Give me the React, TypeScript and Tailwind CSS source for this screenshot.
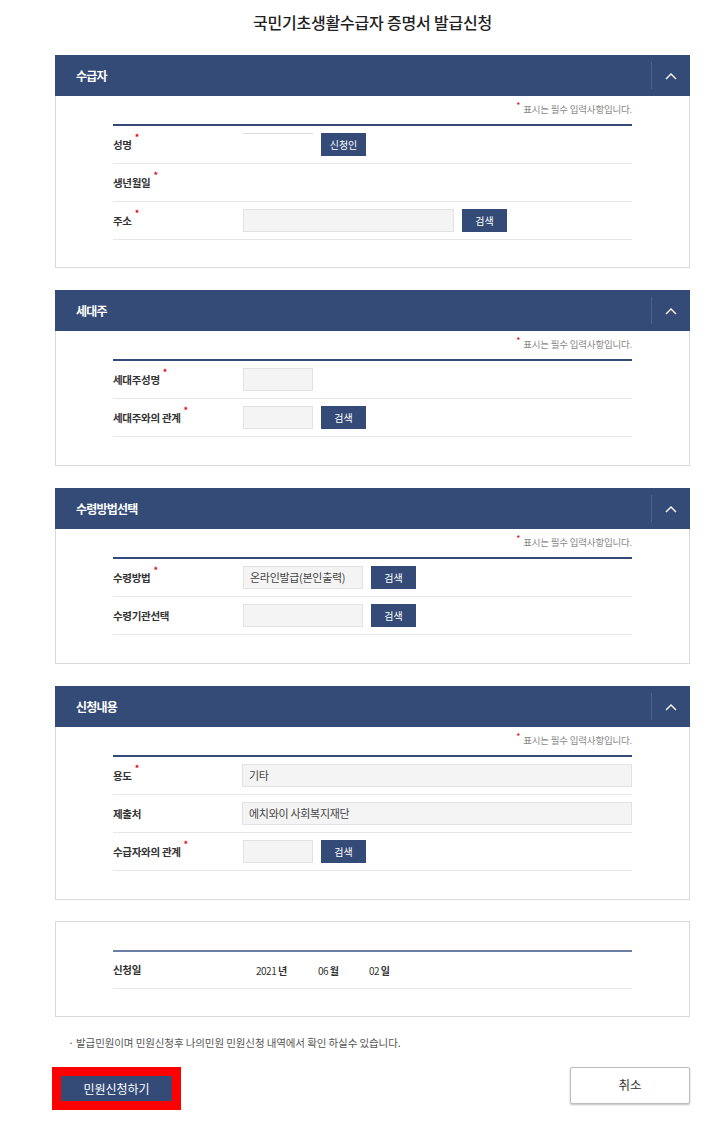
import type { ReactNode } from "react";

const FONT = { fontFamily: '"Noto Sans CJK KR", "Noto Sans", sans-serif' };

function Star() {
  return <span className="relative -top-[7px] ml-[3px] text-[9px] leading-none text-[#e60012]">*</span>;
}

function Btn({ children }: { children: ReactNode }) {
  return (
    <div className="flex h-[23px] w-[45px] items-center justify-center bg-[#344b77] text-[10px] text-white">
      {children}
    </div>
  );
}

function Field({ w, value, plain }: { w: string; value?: string; plain?: boolean }) {
  return (
    <div
      className={`${w} flex h-[23px] items-center pl-[6px] text-[11px] tracking-[-0.3px] text-[#444] ${
        plain ? "border-t border-[#dcdcdc] bg-white" : "border border-[#e2e2e2] bg-[#f4f4f4]"
      }`}
    >
      {value}
    </div>
  );
}

function Row({ label, req, children }: { label: string; req?: boolean; children?: ReactNode }) {
  return (
    <div className="flex h-[38px] items-center border-b border-[#e6e6e6]">
      <div className="flex w-[130px] items-center text-[10.5px] font-bold tracking-[-0.3px] text-[#333]">
        {label}
        {req && <Star />}
      </div>
      <div className="flex items-center gap-[8px]">{children}</div>
    </div>
  );
}

function Section({ title, pb, children }: { title: string; pb: string; children: ReactNode }) {
  return (
    <div>
      <div className="flex h-[41px] items-center bg-[#344b77] pl-[21px]">
        <span className="text-[12px] font-bold tracking-[-0.8px] text-white">{title}</span>
        <div className="ml-auto h-[27px] w-px bg-[#4c6290]" />
        <div className="flex w-[38px] items-center justify-center">
          <svg width="12" height="8" viewBox="0 0 12 8" fill="none">
            <path d="M1 7L6 2L11 7" stroke="white" strokeWidth="1.4" />
          </svg>
        </div>
      </div>
      <div className={`border-x border-b border-[#d9d9d9] px-[57px] pt-[7px] ${pb}`}>
        <div className="flex h-[13px] items-center justify-end text-[9.5px] tracking-[-0.2px] text-[#888]">
          <span className="relative -top-[4px] mr-[3px] text-[9px] leading-none text-[#e60012]">*</span>
          표시는 필수 입력사항입니다.
        </div>
        <div className="mt-[8px] h-[2px] bg-[#344b77]" />
        {children}
      </div>
    </div>
  );
}

export default function App() {
  return (
    <div className="min-h-screen w-full bg-white pb-[14px]" style={FONT}>
      <div className="ml-[55px] w-[635px]">
        <div className="h-[55px] pt-[11px] text-center text-[16px] font-medium leading-[22px] tracking-[-0.2px] text-[#222]">
          국민기초생활수급자 증명서 발급신청
        </div>

        <div className="flex flex-col gap-[22px]">
          <Section title="수급자" pb="pb-[27px]">
            <Row label="성명" req>
              <Field w="w-[70px]" plain />
              <Btn>신청인</Btn>
            </Row>
            <Row label="생년월일" req />
            <Row label="주소" req>
              <Field w="w-[211px]" />
              <Btn>검색</Btn>
            </Row>
          </Section>

          <Section title="세대주" pb="pb-[28px]">
            <Row label="세대주성명" req>
              <Field w="w-[70px]" />
            </Row>
            <Row label="세대주와의 관계" req>
              <Field w="w-[70px]" />
              <Btn>검색</Btn>
            </Row>
          </Section>

          <Section title="수령방법선택" pb="pb-[28px]">
            <Row label="수령방법" req>
              <Field w="w-[120px]" value="온라인발급(본인출력)" />
              <Btn>검색</Btn>
            </Row>
            <Row label="수령기관선택">
              <Field w="w-[120px]" />
              <Btn>검색</Btn>
            </Row>
          </Section>

          <Section title="신청내용" pb="pb-[28px]">
            <Row label="용도" req>
              <Field w="w-[390px]" value="기타" />
            </Row>
            <Row label="제출처">
              <Field w="w-[390px]" value="에치와이 사회복지재단" />
            </Row>
            <Row label="수급자와의 관계" req>
              <Field w="w-[70px]" />
              <Btn>검색</Btn>
            </Row>
          </Section>
        </div>

        <div className="mt-[21px] border border-[#d9d9d9] px-[57px] pb-[27px] pt-[28px]">
          <div className="h-[2px] bg-[#6b7ea3]" />
          <div className="flex h-[37px] items-center border-b border-[#e6e6e6] text-[10.5px] text-[#333]">
            <div className="w-[143px] font-bold tracking-[-0.3px]">신청일</div>
            <div className="flex items-center text-[10px] tracking-[-0.5px]">
              <span className="w-[62px]">
                2021 <span className="font-bold">년</span>
              </span>
              <span className="w-[51px]">
                06 <span className="font-bold">월</span>
              </span>
              <span>
                02 <span className="font-bold">일</span>
              </span>
            </div>
          </div>
        </div>

        <div className="mt-[19px] pl-[13px] text-[10.5px] leading-[13px] tracking-[-0.1px] text-[#555]">
          · 발급민원이며 민원신청후 나의민원 민원신청 내역에서 확인 하실수 있습니다.
        </div>
      </div>

      <div className="ml-[52px] mt-[18px] flex w-[638px] items-start justify-between">
        <div className="bg-[#ff0000] p-[9px]">
          <div className="flex h-[25px] w-[111px] items-center justify-center bg-[#344b77] text-[12px] text-white">
            민원신청하기
          </div>
        </div>
        <div className="flex h-[37px] w-[120px] items-center justify-center rounded-[2px] border border-[#bdbdbd] bg-white text-[12.5px] text-[#333] shadow-[0_1px_2px_rgba(0,0,0,0.25)]">
          취소
        </div>
      </div>
    </div>
  );
}
